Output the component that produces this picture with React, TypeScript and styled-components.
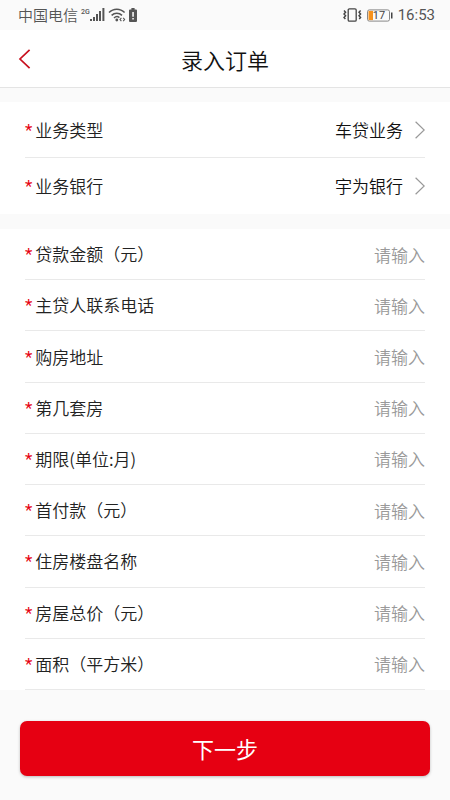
import React from "react";
import styled, { createGlobalStyle } from "styled-components";

const GlobalStyle = createGlobalStyle`
  *, *::before, *::after { box-sizing: border-box; }
  body {
    margin: 0;
    background: #fafafa;
    color: #333;
    font-family: "Noto Sans CJK SC", sans-serif;
    font-size: 17px;
    font-weight: 350;
  }
  button, input, select { font: inherit; }
`;

const Page = styled.div`
  min-height: 100vh;
  display: flex;
  flex-direction: column;
`;

const StatusBar = styled.div`
  height: 30px;
  padding: 0 15px 0 18px;
  display: flex;
  align-items: center;
  justify-content: space-between;
  color: #555;
`;

const StatusGroup = styled.div<{ $gap: number }>`
  display: flex;
  align-items: center;
  gap: ${(p) => p.$gap}px;
`;

const Carrier = styled.span`
  font-size: 15px;
  line-height: 20px;
`;

const Signal = styled.span`
  display: flex;
  align-items: flex-start;
`;

const Network = styled.span`
  font-family: Roboto, sans-serif;
  font-size: 7px;
  font-weight: 500;
  line-height: 8px;
`;

const Clock = styled.time`
  font-family: Roboto, sans-serif;
  font-size: 15px;
  font-weight: 400;
  line-height: 20px;
`;

const Header = styled.header`
  height: 58px;
  padding: 0 16px;
  display: grid;
  grid-template-columns: 40px 1fr 40px;
  align-items: center;
  background: #fff;
  border-bottom: 1px solid #e4e4e4;
`;

const BackButton = styled.button`
  width: 40px;
  height: 40px;
  padding: 0 0 0 2px;
  border: 0;
  background: none;
  display: flex;
  align-items: center;
  cursor: pointer;
`;

const Title = styled.h1`
  margin: 0;
  text-align: center;
  font-size: 22px;
  font-weight: 350;
  line-height: 32px;
  color: #111;
`;

const Form = styled.form`
  flex: 1;
  display: flex;
  flex-direction: column;
  padding-top: 14px;
`;

const PickerList = styled.div`
  background: #fff;
  padding: 0 25px;
  margin-bottom: 15px;
`;

const FieldList = styled.div`
  flex: 1;
  display: grid;
  grid-auto-rows: 1fr;
  background: #fff;
  padding: 0 25px;
`;

const Row = styled.div<{ $tall?: boolean }>`
  min-height: ${(p) => (p.$tall ? 56 : 48)}px;
  display: flex;
  align-items: center;
  border-bottom: 1px solid #e9e9e9;

  ${PickerList} > &:last-child {
    border-bottom-color: transparent;
  }
`;

const Label = styled.label`
  flex: none;
  display: flex;
  align-items: center;
  gap: 3px;
  line-height: 24px;
  color: #222;
`;

const Star = styled.span`
  font-family: Roboto, sans-serif;
  font-weight: 400;
  color: #e60012;
`;

const Select = styled.select`
  flex: 1;
  min-width: 0;
  height: 40px;
  padding: 0 12px 0 0;
  border: 0;
  outline: 0;
  appearance: none;
  background: none;
  text-align: right;
  text-align-last: right;
  color: #111;
`;

const Input = styled.input`
  flex: 1;
  min-width: 0;
  height: 32px;
  padding: 0;
  border: 0;
  outline: 0;
  background: none;
  text-align: right;
  color: #222;

  &::placeholder {
    color: #999;
    opacity: 1;
  }
`;

const Footer = styled.div`
  padding: 31px 20px 24px;
`;

const NextButton = styled.button`
  display: block;
  width: 100%;
  height: 55px;
  padding: 0 0 2px;
  border: 0;
  border-radius: 7px;
  background: #e60012;
  box-shadow: 0 1px 3px rgba(0, 0, 0, 0.25);
  color: #fff;
  font-size: 22px;
  font-weight: 400;
  cursor: pointer;
`;

const SignalIcon = () => (
  <svg width="15" height="14" viewBox="0 0 15 14" fill="#555" aria-hidden="true">
    <rect x="0" y="11" width="2" height="2" />
    <rect x="3" y="9" width="2" height="4" />
    <rect x="6" y="6" width="2" height="7" />
    <rect x="9" y="3" width="2" height="10" />
    <rect x="12.4" y="0" width="2" height="13" />
  </svg>
);

const WifiIcon = () => (
  <svg width="18" height="14" viewBox="0 0 18 14" fill="none" stroke="#555" strokeWidth="1.5" aria-hidden="true">
    <path d="M1 4.6C5.4 0 12.2 0 16.6 4.6" />
    <path d="M3.6 7.4C6.6 4.4 11 4.4 14 7.4" />
    <path d="M6 10C7.8 8.2 9.8 8.2 11.4 9.6" />
    <circle cx="8.8" cy="12" r="1.4" fill="#555" stroke="none" />
    <path d="M13.4 9.8 12 11.5l1.4 1.7M15.2 9.8l1.4 1.7-1.4 1.7" strokeWidth="1.1" />
  </svg>
);

const BatteryAlertIcon = () => (
  <svg width="8" height="14" viewBox="0 0 8 14" aria-hidden="true">
    <path d="M2.4 0h3.2v1.4H7a1 1 0 0 1 1 1V13a1 1 0 0 1-1 1H1a1 1 0 0 1-1-1V2.4a1 1 0 0 1 1-1h1.4z" fill="#555" />
    <path d="M3.3 4h1.5v4.8H3.3zM3.3 10h1.5v1.5H3.3z" fill="#fff" />
  </svg>
);

const VibrateIcon = () => (
  <svg width="19" height="14" viewBox="0 0 19 14" fill="none" stroke="#444" aria-hidden="true">
    <rect x="5.2" y="0.8" width="8" height="12.4" rx="1.2" strokeWidth="1.3" />
    <path
      d="M1 2.5l1.600 1.700L1 6l1.600 1.700L1 9.400l1.400 1.600M17.600 2.500L16 4.200 17.600 6 16 7.700l1.600 1.700L16.200 11"
      strokeWidth="1.4"
    />
  </svg>
);

const BatteryIcon = () => (
  <svg width="26" height="13" viewBox="0 0 26 13" role="img" aria-label="17%">
    <rect x="0.5" y="0.9" width="22" height="11.2" rx="1.8" fill="none" stroke="#888" />
    <rect x="1.5" y="1.9" width="4.5" height="9.2" fill="#f7931e" />
    <rect x="24" y="3.5" width="1.5" height="6" fill="#444" />
    <text x="12" y="10.3" textAnchor="middle" fontFamily="Roboto, sans-serif" fontSize="11" fontWeight="400" fill="#444">
      17
    </text>
  </svg>
);

const BackIcon = () => (
  <svg width="13" height="20" viewBox="0 0 13 20" fill="none" stroke="#c8101e" strokeWidth="1.7" aria-hidden="true">
    <path d="M11.6 0.8 2 10l9.6 9.2" />
  </svg>
);

const ChevronIcon = () => (
  <svg width="10" height="18" viewBox="0 0 10 18" fill="none" stroke="#999" strokeWidth="1.2" aria-hidden="true">
    <path d="M0.6 0.8 9.2 9l-8.6 8.2" />
  </svg>
);

const pickers = [
  { id: "type", label: "业务类型", value: "车贷业务" },
  { id: "bank", label: "业务银行", value: "宇为银行" },
];

const fields = [
  { id: "amount", label: "贷款金额（元）" },
  { id: "phone", label: "主贷人联系电话" },
  { id: "address", label: "购房地址" },
  { id: "ordinal", label: "第几套房" },
  { id: "term", label: "期限(单位:月)" },
  { id: "deposit", label: "首付款（元）" },
  { id: "estate", label: "住房楼盘名称" },
  { id: "price", label: "房屋总价（元）" },
  { id: "area", label: "面积（平方米）" },
];

const RequiredLabel = ({ id, text }: { id: string; text: string }) => (
  <Label htmlFor={id}>
    <Star>*</Star>
    <span>{text}</span>
  </Label>
);

export default function App() {
  return (
    <Page>
      <GlobalStyle />
      <StatusBar>
        <StatusGroup $gap={3}>
          <Carrier>中国电信</Carrier>
          <Signal>
            <Network>2G</Network>
            <SignalIcon />
          </Signal>
          <WifiIcon />
          <BatteryAlertIcon />
        </StatusGroup>
        <StatusGroup $gap={5}>
          <VibrateIcon />
          <BatteryIcon />
          <Clock>16:53</Clock>
        </StatusGroup>
      </StatusBar>
      <Header>
        <BackButton type="button" aria-label="返回">
          <BackIcon />
        </BackButton>
        <Title>录入订单</Title>
      </Header>
      <Form onSubmit={(e) => e.preventDefault()}>
        <PickerList>
          {pickers.map((p) => (
            <Row key={p.id} $tall>
              <RequiredLabel id={p.id} text={p.label} />
              <Select id={p.id} defaultValue={p.value}>
                <option>{p.value}</option>
              </Select>
              <ChevronIcon />
            </Row>
          ))}
        </PickerList>
        <FieldList>
          {fields.map((f) => (
            <Row key={f.id}>
              <RequiredLabel id={f.id} text={f.label} />
              <Input id={f.id} type="text" placeholder="请输入" />
            </Row>
          ))}
        </FieldList>
        <Footer>
          <NextButton type="submit">下一步</NextButton>
        </Footer>
      </Form>
    </Page>
  );
}
